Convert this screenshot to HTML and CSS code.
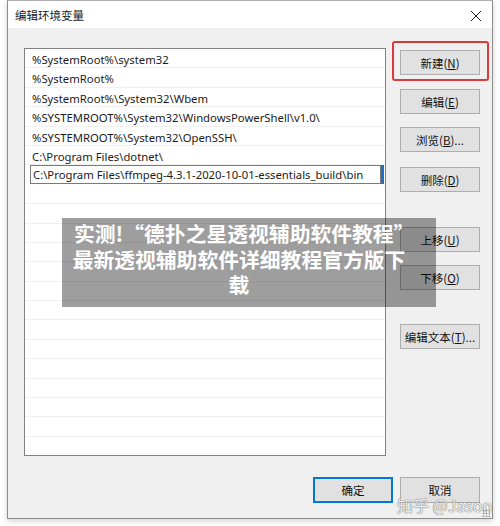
FILE: index.html
```html
<!DOCTYPE html>
<html lang="zh-CN">
<head>
<meta charset="utf-8">
<title>编辑环境变量</title>
<link rel="stylesheet" href="styles.css">
</head>
<body>
<div class="window">
  <div class="titlebar">
    <span class="title">编辑环境变量</span>
    <svg class="close" width="12" height="12" viewBox="0 0 12 12"><path d="M1 1 L11 11 M11 1 L1 11" stroke="#222" stroke-width="1" fill="none"/></svg>
  </div>
  <div class="body">
    <div class="main">
      <div class="list">
        <div class="row">%SystemRoot%\system32</div>
        <div class="row">%SystemRoot%</div>
        <div class="row">%SystemRoot%\System32\Wbem</div>
        <div class="row">%SYSTEMROOT%\System32\WindowsPowerShell\v1.0\</div>
        <div class="row">%SYSTEMROOT%\System32\OpenSSH\</div>
        <div class="row">C:\Program Files\dotnet\</div>
        <div class="row edit-row"><span class="edit">C:\Program Files\ffmpeg-4.3.1-2020-10-01-essentials_build\bin</span><span class="caret"></span></div>
        <div class="row"></div>
        <div class="row"></div>
        <div class="row"></div>
        <div class="row"></div>
        <div class="row"></div>
        <div class="row"></div>
        <div class="row"></div>
        <div class="row"></div>
        <div class="row"></div>
        <div class="row"></div>
        <div class="row"></div>
        <div class="row"></div>
        <div class="row"></div>
      </div>
      <div class="side">
        <div class="highlight"></div>
        <button class="btn b-new">新建(<u>N</u>)</button>
        <button class="btn b-edit">编辑(<u>E</u>)</button>
        <button class="btn b-browse">浏览(<u>B</u>)...</button>
        <button class="btn b-del">删除(<u>D</u>)</button>
        <button class="btn b-up">上移(<u>U</u>)</button>
        <button class="btn b-down">下移(<u>O</u>)</button>
        <button class="btn b-text">编辑文本(<u>T</u>)...</button>
      </div>
    </div>
    <div class="footer">
      <button class="btn ok">确定</button>
      <button class="btn">取消</button>
    </div>
    <div class="watermark">知乎 @Jason</div>
    <div class="grip"></div>
  </div>
</div>
<div class="overlay">实测!“德扑之星透视辅助软件教程”最新透视辅助软件详细教程官方版下载</div>
</body>
</html>
```
FILE: styles.css
```css
html, body {
  margin: 0;
  padding: 0;
  background: #ffffff;
}
body {
  width: 500px;
  height: 526px;
  overflow: hidden;
  position: relative;
  font-family: "Noto Sans", "Noto Sans CJK SC", sans-serif;
}
.window {
  margin-left: 7px;
  width: 486px;
  height: 519px;
  box-sizing: border-box;
  border: 1px solid #8c8c8c;
  border-top-color: #b0b0b0;
  box-shadow: 0 2px 6px rgba(0,0,0,0.18);
  display: flex;
  flex-direction: column;
  background: #f0f0f0;
}
.titlebar {
  height: 27px;
  background: #ffffff;
  display: flex;
  align-items: center;
  justify-content: space-between;
  padding: 0 10px 0 7px;
  flex-shrink: 0;
}
.title {
  font-family: "Noto Sans CJK SC", sans-serif;
  font-size: 11.5px;
  color: #1a1a1a;
}
.close {
  display: block;
  margin-top: 2px;
}
.body {
  flex: 1;
  position: relative;
  padding: 20px 0 0 16px;
}
.main {
  display: flex;
  align-items: flex-start;
}
.list {
  width: 362px;
  height: 408px;
  box-sizing: border-box;
  border: 1px solid #828282;
  background: #ffffff;
  overflow: hidden;
}
.row {
  height: 19.4px;
  box-sizing: border-box;
  border-bottom: 1px solid #f0f0f0;
  padding-left: 7px;
  font-size: 11.3px;
  line-height: 21px;
  color: #1b1b1b;
  white-space: nowrap;
}
.edit-row {
  display: flex;
  padding-left: 5px;
  border-bottom-color: #ffffff;
}
.edit {
  width: 351px;
  height: 19px;
  box-sizing: border-box;
  border: 1px solid #7a7a7a;
  padding-left: 2px;
  line-height: 18px;
  overflow: hidden;
}
.caret {
  width: 3px;
  height: 19px;
  background: #1f6fc4;
}
.side {
  position: relative;
  margin-left: 14px;
  display: flex;
  flex-direction: column;
  padding-top: 2px;
}
.btn {
  width: 80px;
  height: 25px;
  box-sizing: border-box;
  background: #e1e1e1;
  border: 1px solid #adadad;
  font-family: "Noto Sans CJK SC", sans-serif;
  font-size: 11.5px;
  color: #111;
  padding: 0;
  margin: 0;
  line-height: 22px;
}
.btn u {
  text-underline-offset: 1px;
}
.b-edit { margin-top: 14px; }
.b-browse { margin-top: 13px; }
.b-del { margin-top: 15px; }
.b-up { margin-top: 35px; }
.b-down { margin-top: 13px; }
.b-text { margin-top: 34px; }
.highlight {
  position: absolute;
  left: -8px;
  top: -7px;
  width: 97px;
  height: 40px;
  box-sizing: border-box;
  border: 2px solid #d93a3a;
  border-radius: 3px;
}
.footer {
  display: flex;
  gap: 7px;
  margin-top: 21px;
  padding-left: 289px;
}
.footer .btn {
  height: 26px;
}
.btn.ok {
  border: 1px solid #0078d7;
  box-shadow: inset 0 0 0 1px #0078d7;
}
.watermark {
  position: absolute;
  left: 389px;
  top: 465px;
  font-family: "Noto Sans CJK SC", sans-serif;
  font-size: 16px;
  color: rgba(255,255,255,0.9);
  text-shadow: 0 0 1px #6a6a6a, 0 0 1px #6a6a6a;
  white-space: nowrap;
}
.grip {
  position: absolute;
  right: 2px;
  bottom: 1px;
  width: 8px;
  height: 8px;
  background-image: radial-gradient(circle, #9a9a9a 0.9px, transparent 1.1px);
  background-size: 3px 3px;
}
.overlay {
  position: absolute;
  left: 62px;
  top: 218px;
  width: 374px;
  height: 89px;
  box-sizing: border-box;
  padding: 3px 28px 0 8px;
  background: rgba(0,0,0,0.38);
  color: #ffffff;
  font-family: "Noto Sans CJK SC", sans-serif;
  font-weight: 700;
  font-size: 20.8px;
  line-height: 25.5px;
  text-align: center;
}
```
